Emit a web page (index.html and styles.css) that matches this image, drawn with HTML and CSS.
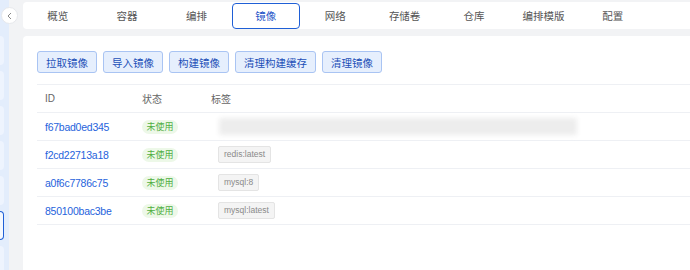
FILE: index.html
```html
<!DOCTYPE html>
<html lang="zh-CN">
<head>
    <meta charset="UTF-8">
    <meta name="viewport" content="width=device-width, initial-scale=1.0">
    <title>镜像</title>
    <link rel="stylesheet" href="styles.css">
</head>
<body>
    <div class="layout">
        <aside class="sidebar">
            <div class="side-item"></div>
            <div class="side-item"></div>
            <div class="side-item"></div>
            <div class="side-item"></div>
            <div class="side-item"></div>
            <div class="side-item active"></div>
            <div class="side-item"></div>
        </aside>
        <button class="collapse-btn" aria-label="收起">
            <svg width="8" height="8" viewBox="0 0 8 8"><path d="M5 1 L2 4 L5 7" fill="none" stroke="#888" stroke-width="1"/></svg>
        </button>

        <main class="main">
            <nav class="tabs">
                <a class="tab">概览</a>
                <a class="tab">容器</a>
                <a class="tab">编排</a>
                <a class="tab active">镜像</a>
                <a class="tab">网络</a>
                <a class="tab">存储卷</a>
                <a class="tab">仓库</a>
                <a class="tab">编排模版</a>
                <a class="tab">配置</a>
                <span class="tab-spacer"></span>
            </nav>

            <section class="card">
                <div class="toolbar">
                    <button class="btn">拉取镜像</button>
                    <button class="btn">导入镜像</button>
                    <button class="btn">构建镜像</button>
                    <button class="btn">清理构建缓存</button>
                    <button class="btn">清理镜像</button>
                </div>

                <table class="table">
                    <thead>
                        <tr>
                            <th class="col-id">ID</th>
                            <th class="col-state">状态</th>
                            <th>标签</th>
                        </tr>
                    </thead>
                    <tbody>
                        <tr>
                            <td><a class="link">f67bad0ed345</a></td>
                            <td><span class="badge">未使用</span></td>
                            <td><span class="tag-blur"></span></td>
                        </tr>
                        <tr>
                            <td><a class="link">f2cd22713a18</a></td>
                            <td><span class="badge">未使用</span></td>
                            <td><span class="tag">redis:latest</span></td>
                        </tr>
                        <tr>
                            <td><a class="link">a0f6c7786c75</a></td>
                            <td><span class="badge">未使用</span></td>
                            <td><span class="tag">mysql:8</span></td>
                        </tr>
                        <tr>
                            <td><a class="link">850100bac3be</a></td>
                            <td><span class="badge">未使用</span></td>
                            <td><span class="tag">mysql:latest</span></td>
                        </tr>
                    </tbody>
                </table>
            </section>
        </main>
    </div>
</body>
</html>
```

FILE: styles.css
```css
/* 整体 */
body {
    margin: 0;
    font-family: "Liberation Sans", "Noto Sans CJK SC", sans-serif;
    background: #f2f3f5;
    overflow: hidden;
}

.layout {
    display: flex;
    height: 270px;
    position: relative;
}

/* 侧边栏（收起状态） */
.sidebar {
    width: 9px;
    flex-shrink: 0;
    background: #e3edfc;
    overflow: hidden;
    padding-top: 36px;
    box-sizing: border-box;
}

.side-item {
    width: 4px;
    height: 29px;
    margin-bottom: 6px;
    background: #eef4fe;
    border-radius: 0 4px 4px 0;
    box-sizing: border-box;
}

.side-item.active {
    background: #f4f8ff;
    border: 1.5px solid #1f5fd6;
    border-left: none;
}

.collapse-btn {
    position: absolute;
    left: 1px;
    top: 7px;
    width: 17px;
    height: 17px;
    padding: 0;
    border: 1px solid #e6e8ec;
    border-radius: 50%;
    background: #fff;
    display: flex;
    align-items: center;
    justify-content: center;
}

/* 主区域 */
.main {
    flex: 1;
    padding: 2px 0 0 14px;
    min-width: 0;
}

.tabs {
    display: flex;
    height: 27px;
    background: #fff;
    border-radius: 4px 0 0 4px;
    align-items: center;
}

.tab {
    width: 69.4px;
    flex-shrink: 0;
    height: 26px;
    box-sizing: border-box;
    display: flex;
    align-items: center;
    justify-content: center;
    font-size: 10.5px;
    color: #555;
}

.tab.active {
    border: 1.5px solid #1f5fd6;
    border-radius: 4px;
    color: #1f55c8;
    width: 68px;
    margin: 0 0.7px;
}

.tab-spacer {
    flex: 1;
}

.card {
    margin-top: 7px;
    background: #fff;
    border-radius: 4px 0 0 0;
    padding: 15px 0 0 14px;
    height: 240px;
    box-sizing: border-box;
}

/* 按钮 */
.toolbar {
    display: flex;
    gap: 6px;
    margin-bottom: 11px;
}

.btn {
    height: 22px;
    padding: 0 8px;
    font-family: inherit;
    font-size: 10.5px;
    color: #1d4fb8;
    background: #e6effd;
    border: 1px solid #a9c4f3;
    border-radius: 3px;
}

/* 表格 */
.table {
    width: 100%;
    border-collapse: collapse;
    font-size: 10px;
}

.table th,
.table td {
    height: 27px;
    padding: 0 8px;
    text-align: left;
    border-top: 1px solid #eef0f4;
    border-bottom: 1px solid #eef0f4;
}

.table th {
    font-weight: normal;
    color: #666;
}

.col-id {
    width: 81px;
}

.col-state {
    width: 53px;
}

.link {
    color: #1f63dc;
    font-size: 10.5px;
    letter-spacing: -0.25px;
}

.badge {
    display: inline-block;
    width: 36px;
    height: 14px;
    line-height: 14px;
    text-align: center;
    font-size: 9px;
    color: #4fae3f;
    background: #edf8e8;
    border-radius: 7px;
}

.tag {
    display: inline-block;
    margin-left: 7px;
    padding: 0 5px;
    height: 15px;
    line-height: 15px;
    font-size: 8.5px;
    color: #8a8a8a;
    background: #f4f4f4;
    border: 1px solid #e4e4e4;
    border-radius: 2px;
}

.tag-blur {
    display: block;
    margin-left: 8px;
    width: 358px;
    height: 17px;
    background: #ededed;
    border-radius: 2px;
    filter: blur(2.5px);
}
```
